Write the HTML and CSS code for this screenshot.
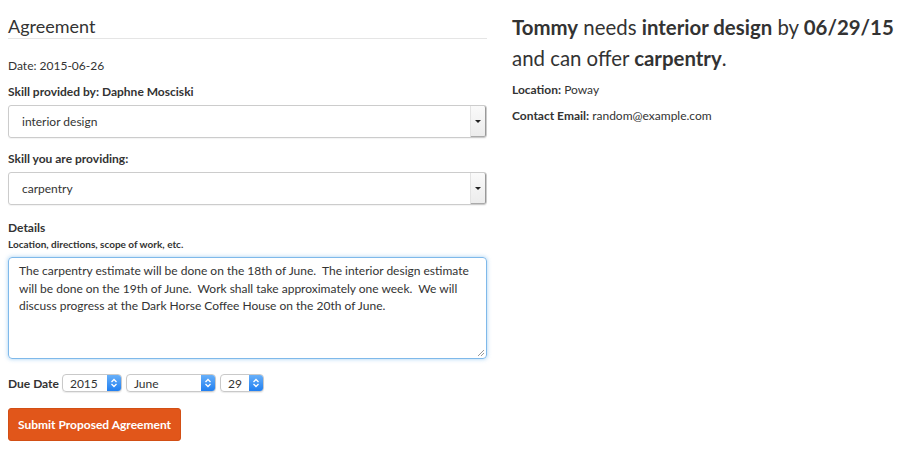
FILE: index.html
```html
<!DOCTYPE html>
<html>
<head>
<meta charset="utf-8">
<link rel="stylesheet" href="styles.css">
</head>
<body>
<div class="page">
  <div class="left">
    <h3 class="title">Agreement</h3>
    <p class="date">Date: 2015-06-26</p>
    <label class="lbl">Skill provided by: Daphne Mosciski</label>
    <div class="select"><span class="sel-text">interior design</span><span class="sel-btn"><i class="tri"></i></span></div>
    <label class="lbl">Skill you are providing:</label>
    <div class="select"><span class="sel-text">carpentry</span><span class="sel-btn"><i class="tri"></i></span></div>
    <label class="lbl lbl-details">Details</label>
    <div class="hint">Location, directions, scope of work, etc.</div>
    <div class="textarea">The carpentry estimate will be done on the 18th of June.&nbsp; The interior design estimate will be done on the 19th of June.&nbsp; Work shall take approximately one week.&nbsp; We will discuss progress at the Dark Horse Coffee House on the 20th of June.<svg class="grip" width="9" height="9" viewBox="0 0 9 9"><path d="M8 2L2 8M8 5L5 8" stroke="#999" stroke-width="1" fill="none"/></svg></div>
    <div class="due">
      <span class="due-lbl">Due Date</span>
      <div class="pop w-year"><span>2015</span><span class="pop-btn"><svg width="8" height="12" viewBox="0 0 8 12"><path d="M1.5 5L4 2.5L6.5 5M1.5 7L4 9.5L6.5 7" stroke="#fff" stroke-width="1.3" fill="none"/></svg></span></div>
      <div class="pop w-month"><span>June</span><span class="pop-btn"><svg width="8" height="12" viewBox="0 0 8 12"><path d="M1.5 5L4 2.5L6.5 5M1.5 7L4 9.5L6.5 7" stroke="#fff" stroke-width="1.3" fill="none"/></svg></span></div>
      <div class="pop w-day"><span>29</span><span class="pop-btn"><svg width="8" height="12" viewBox="0 0 8 12"><path d="M1.5 5L4 2.5L6.5 5M1.5 7L4 9.5L6.5 7" stroke="#fff" stroke-width="1.3" fill="none"/></svg></span></div>
    </div>
    <button class="submit">Submit Proposed Agreement</button>
  </div>
  <div class="right">
    <h2 class="summary"><b>Tommy</b> needs <b>interior design</b> by <b>06/29/15</b> and can offer <b>carpentry</b>.</h2>
    <p class="info"><b>Location:</b> Poway</p>
    <p class="info"><b>Contact Email:</b> random@example.com</p>
  </div>
</div>
</body>
</html>
```

FILE: styles.css
```css
* { box-sizing: border-box; }
html, body { margin: 0; padding: 0; background: #fff; }
body {
  font-family: Lato, "Open Sans", sans-serif;
  color: #333;
  font-size: 12px;
  padding: 0 0 0 8px;
}
.page {
  display: grid;
  grid-template-columns: 479px 1fr;
  column-gap: 25px;
}
.left { display: flex; flex-direction: column; align-items: stretch; }
.title {
  font-weight: 400;
  font-size: 18px;
  line-height: 22px;
  margin: 15px 0 0;
  padding-bottom: 1px;
  border-bottom: 1px solid #e5e5e5;
}
.date { margin: 20px 0 0; line-height: 14px; }
.lbl { display: block; font-weight: 700; line-height: 14px; margin-top: 12px; }
.select {
  margin-top: 6px;
  height: 33px;
  border: 1px solid #ccc;
  border-radius: 3px;
  display: flex;
  align-items: center;
  box-shadow: 0 1px 1px rgba(0,0,0,0.05);
}
.select + .lbl { margin-top: 14px; }
.sel-text { flex: 1; padding-left: 13px; font-size: 12px; }
.sel-btn {
  width: 16px; height: 31px;
  background: linear-gradient(#fafafa, #ececec);
  border-left: 1px solid #e3e3e3;
  border-right: 1px solid #999;
  border-bottom: 1px solid #aaa;
  border-radius: 0 2px 2px 0;
  display: flex; align-items: center; justify-content: center;
}
.tri {
  width: 0; height: 0;
  border-left: 3px solid transparent;
  border-right: 3px solid transparent;
  border-top: 3px solid #222;
}
.select + .lbl-details { margin-top: 16px; }
.hint { font-size: 10px; font-weight: 700; margin-top: 3px; line-height: 12px; }
.textarea {
  position: relative;
  margin-top: 7px;
  height: 102px;
  border: 1px solid #7fb9ea;
  border-radius: 4px;
  box-shadow: 0 0 4px rgba(102,175,233,0.6);
  padding: 4px 10px;
  line-height: 17.5px;
  font-size: 12px;
}
.grip { position: absolute; right: 1px; bottom: 1px; }
.due {
  display: flex;
  align-items: center;
  margin-top: 14px;
  height: 20px;
}
.due-lbl { font-weight: 700; margin-right: 3px; }
.pop {
  height: 18px;
  border: 1px solid #c9c9c9;
  border-radius: 4px;
  display: flex; align-items: center; justify-content: space-between;
  margin-right: 4px;
  font-size: 12px;
  overflow: hidden;
  box-shadow: 0 1px 1px rgba(0,0,0,0.08);
}
.pop span:first-child { padding-left: 7px; }
.pop-btn {
  width: 14px; height: 18px;
  background: linear-gradient(#6cb3fa, #1c7cf0);
  display: flex; align-items: center; justify-content: center;
  border-radius: 0 3px 3px 0;
}
.w-year { width: 60px; }
.w-month { width: 90px; }
.w-day { width: 44px; }
.submit {
  align-self: flex-start;
  margin-top: 15px;
  width: 173px; height: 33px;
  background: #e1561a;
  border: 1px solid #d24f15;
  border-radius: 3px;
  color: #fff;
  font-family: Lato, sans-serif;
  font-weight: 700;
  font-size: 12px;
  padding: 0;
}
.summary {
  font-size: 20.4px;
  font-weight: 400;
  line-height: 31px;
  margin: 12px 0 0;
  color: #333;
}
.summary b { font-weight: 700; }
.info { font-size: 12px; margin: 9px 0 0; line-height: 14px; }
.info + .info { margin-top: 12px; }
```
